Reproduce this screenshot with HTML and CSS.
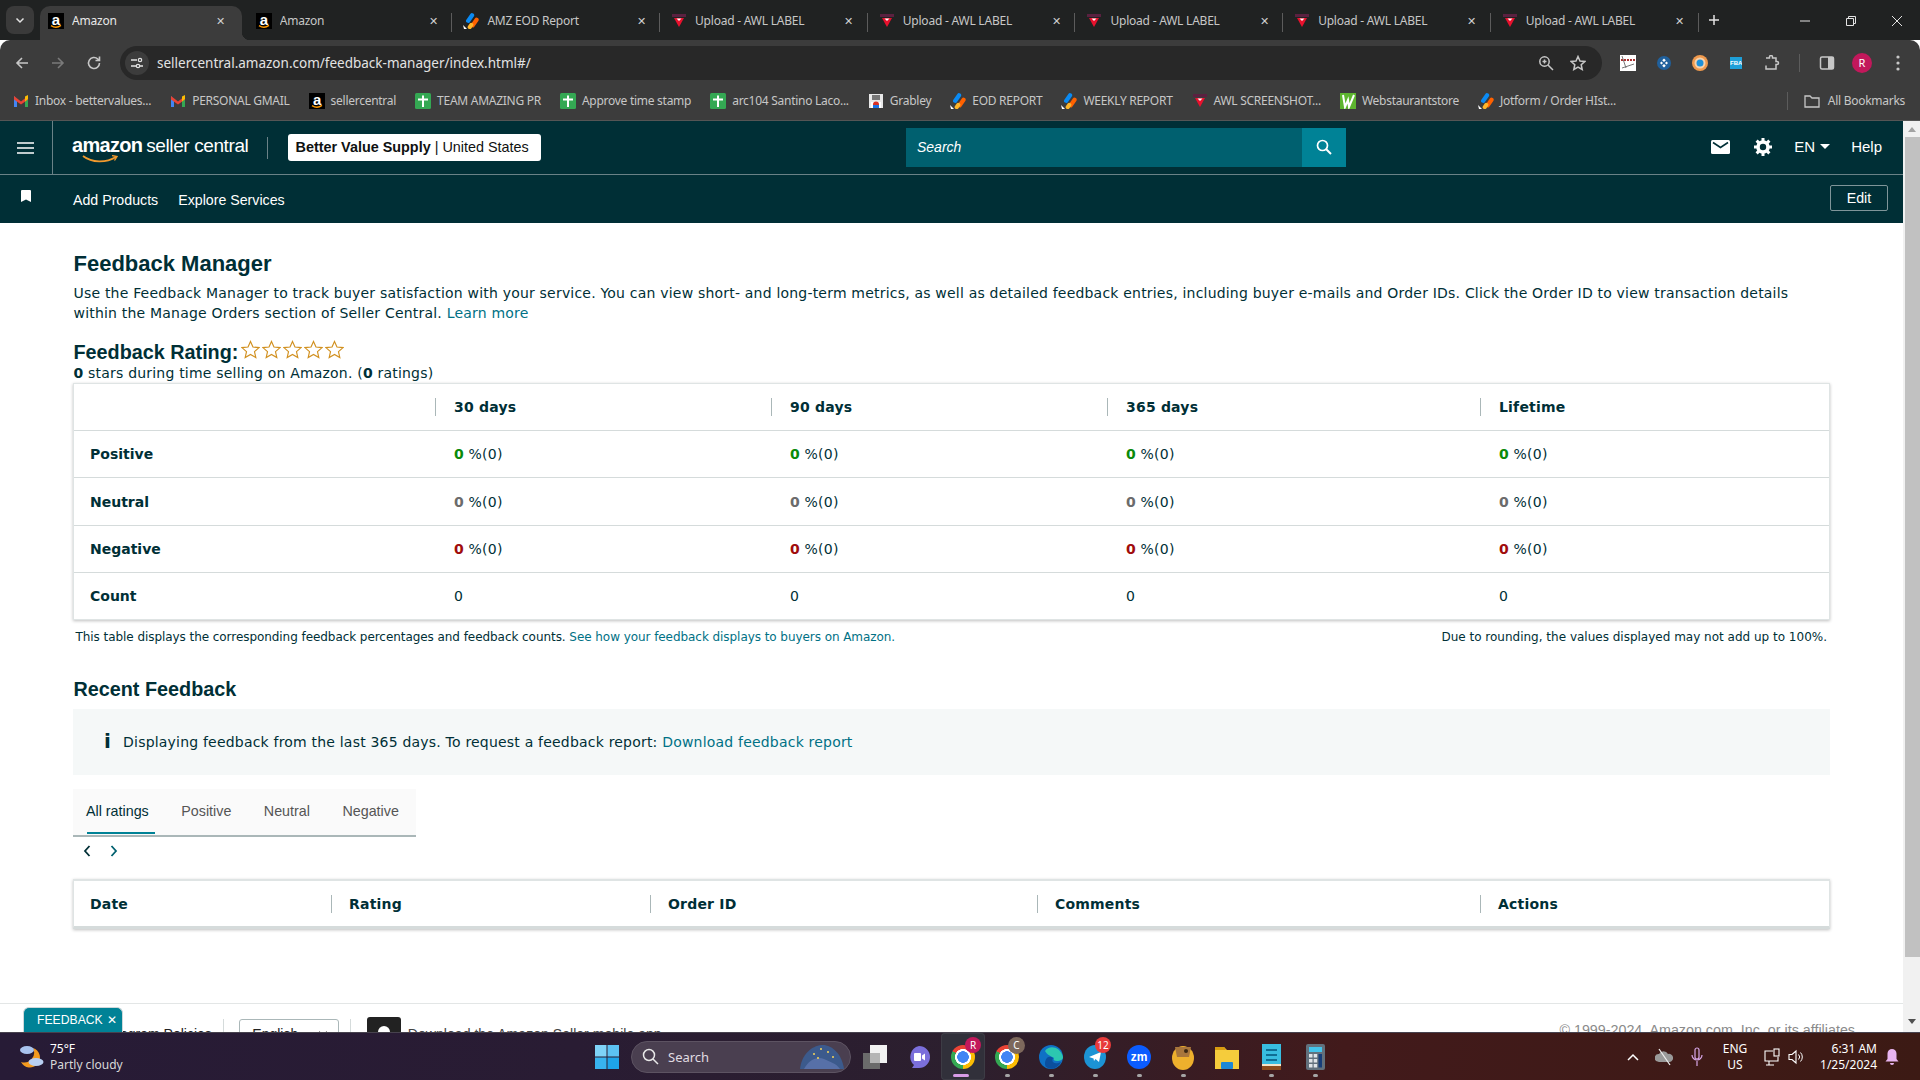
FILE: index.html
```html
<!DOCTYPE html>
<html lang="en">
<head>
<meta charset="utf-8">
<title>Amazon</title>
<link rel="stylesheet" href="styles.css">
</head>
<body>
<svg class="defs" width="0" height="0" aria-hidden="true">
  <defs>
    <symbol id="fav-amazon" viewBox="0 0 16 16"><rect width="16" height="16" fill="#000"/><text x="8" y="11.500" text-anchor="middle" font-family="Liberation Sans" font-weight="700" font-size="15" fill="#fff">a</text><path d="M3 12.600c3 2 7 2 10-.2" fill="none" stroke="#f90" stroke-width="1.400"/></symbol>
    <symbol id="fav-jot" viewBox="0 0 16 16"><rect x="5" y="-.5" width="4.200" height="11" rx="2" transform="rotate(35 7 5)" fill="#0a8af3"/><rect x="9.500" y="4" width="4.200" height="11" rx="2" transform="rotate(35 11.500 9.500)" fill="#ff6100"/><rect x="5.500" y="9.500" width="4" height="7" rx="2" transform="rotate(35 7.500 13)" fill="#ffb629"/><path d="M0 12l4 4H1z" fill="#fff"/></symbol>
    <symbol id="fav-awl" viewBox="0 0 16 16"><rect x="1" y="1" width="14" height="3" fill="#5a2140"/><path d="M3 5h10l-5 9z" fill="#e8112d"/><path d="M5.500 5.500h5L8 8z" fill="#fff"/></symbol>
    <symbol id="fav-gmail" viewBox="0 0 16 16"><path d="M1 3v11h3V7z" fill="#4285f4"/><path d="M15 3v11h-3V7z" fill="#34a853"/><path d="M1 3l7 5.500L15 3v3.500l-7 5-7-5z" fill="#ea4335"/><path d="M12 3.500L15 2v4l-3 2.500z" fill="#fbbc04"/></symbol>
    <symbol id="fav-sheet" viewBox="0 0 16 16"><rect width="16" height="16" rx="1.500" fill="#34a853"/><path d="M3 6.500h10M8 2.500V14" stroke="#fff" stroke-width="2"/></symbol>
    <symbol id="fav-grab" viewBox="0 0 16 16"><rect x="1" y="1" width="14" height="14" fill="#e8e8e8"/><path d="M4 2h8v5H4z" fill="#777"/><path d="M3 9h10v6H3z" fill="#fff"/><circle cx="8" cy="11.500" r="3" fill="#d93025"/><path d="M5 12h6v3H5z" fill="#1a73e8"/></symbol>
    <symbol id="fav-web" viewBox="0 0 16 16"><rect width="16" height="16" fill="#fff"/><path d="M0 0h16v16H0z" fill="#5db52f"/><path d="M3 2l2 12 3-7 1 7 5-12" fill="none" stroke="#fff" stroke-width="2"/></symbol>
    <symbol id="star" viewBox="0 0 20 20"><path d="M10 1.500l2.600 5.900 6.400.6-4.800 4.200 1.400 6.300L10 15.200l-5.600 3.300 1.400-6.300L1 8l6.400-.6z" fill="#fff" stroke="#d1901f" stroke-width="1.200"/></symbol>
  </defs>
</svg>

<div class="screen">
  <div class="tabstrip">
    <div class="tabsearch"><svg width="12" height="12" viewBox="0 0 12 12"><path d="M2.500 4.500L6 8l3.500-3.500" fill="none" stroke="#e3e3e3" stroke-width="1.500"/></svg></div>
    <div class="tab tab-active"><svg class="fav"><use href="#fav-amazon"/></svg><span class="tab-title">Amazon</span><span class="tab-x">✕</span></div>
    <div class="tab tab-plain"><svg class="fav"><use href="#fav-amazon"/></svg><span class="tab-title">Amazon</span><span class="tab-x">✕</span></div>
    <div class="tab"><svg class="fav"><use href="#fav-jot"/></svg><span class="tab-title">AMZ EOD Report</span><span class="tab-x">✕</span></div>
    <div class="tab"><svg class="fav"><use href="#fav-awl"/></svg><span class="tab-title">Upload - AWL LABEL</span><span class="tab-x">✕</span></div>
    <div class="tab"><svg class="fav"><use href="#fav-awl"/></svg><span class="tab-title">Upload - AWL LABEL</span><span class="tab-x">✕</span></div>
    <div class="tab"><svg class="fav"><use href="#fav-awl"/></svg><span class="tab-title">Upload - AWL LABEL</span><span class="tab-x">✕</span></div>
    <div class="tab"><svg class="fav"><use href="#fav-awl"/></svg><span class="tab-title">Upload - AWL LABEL</span><span class="tab-x">✕</span></div>
    <div class="tab"><svg class="fav"><use href="#fav-awl"/></svg><span class="tab-title">Upload - AWL LABEL</span><span class="tab-x">✕</span></div>
    <div class="newtab"><svg width="12" height="12" viewBox="0 0 12 12"><path d="M6 1v10M1 6h10" stroke="#e3e3e3" stroke-width="1.500"/></svg></div>
    <div class="winctl">
      <svg width="12" height="12" viewBox="0 0 12 12"><path d="M1 6h10" stroke="#e3e3e3"/></svg>
      <svg width="12" height="12" viewBox="0 0 12 12"><path d="M1.500 3.500h7v7h-7zM3.500 3.500v-2h7v7h-2" fill="none" stroke="#e3e3e3"/></svg>
      <svg width="12" height="12" viewBox="0 0 12 12"><path d="M1 1l10 10M11 1L1 11" stroke="#e3e3e3"/></svg>
    </div>
  </div>

  <div class="toolbar">
    <div class="nav-icons">
      <svg width="16" height="16" viewBox="0 0 16 16"><path d="M14 8H3M8 3L3 8l5 5" fill="none" stroke="#c7c7c7" stroke-width="1.600"/></svg>
      <svg width="16" height="16" viewBox="0 0 16 16"><path d="M2 8h11M8 3l5 5-5 5" fill="none" stroke="#7a7a7a" stroke-width="1.600"/></svg>
      <svg width="16" height="16" viewBox="0 0 16 16"><path d="M13.500 8A5.500 5.500 0 1 1 11.800 4L13.500 5.500M13.500 1.500v4h-4" fill="none" stroke="#c7c7c7" stroke-width="1.600"/></svg>
    </div>
    <div class="omnibox">
      <span class="siteinfo"><svg width="14" height="14" viewBox="0 0 14 14"><path d="M1 4h6M10 10h3M1 10h5" stroke="#e3e3e3" stroke-width="1.300"/><circle cx="10" cy="4" r="1.700" fill="none" stroke="#e3e3e3" stroke-width="1.200"/><circle cx="8" cy="10" r="1.700" fill="none" stroke="#e3e3e3" stroke-width="1.200"/></svg></span>
      <span class="url">sellercentral.amazon.com/feedback-manager/index.html#/</span>
      <span class="omni-right">
        <svg width="16" height="16" viewBox="0 0 16 16"><circle cx="6.500" cy="6.500" r="4.700" fill="none" stroke="#c7c7c7" stroke-width="1.500"/><path d="M10 10l5 5M4.500 6.500h4M6.500 4.500v4" stroke="#c7c7c7" stroke-width="1.500"/></svg>
        <svg width="16" height="16" viewBox="0 0 16 16"><path d="M8 1.500l2 4.500 4.800.5-3.600 3.200 1 4.800L8 12l-4.200 2.500 1-4.800L1.200 6.500 6 6z" fill="none" stroke="#c7c7c7" stroke-width="1.500"/></svg>
      </span>
    </div>
    <div class="ext-icons">
      <span class="ext"><svg width="16" height="16" viewBox="0 0 16 16"><rect width="16" height="16" fill="#fff"/><path d="M1 5h14" stroke="#a33" stroke-width="2" stroke-dasharray="2 1"/><path d="M2 13l12-4M2 1l4 12" stroke="#777"/></svg></span>
      <span class="ext"><svg width="14" height="14" viewBox="0 0 14 14"><circle cx="7" cy="7" r="7" fill="#20609c"/><path d="M7 2.500l1.800 1.800L7 6.100 5.200 4.300zM7 7.900l1.800 1.800L7 11.500 5.200 9.700zM3 7l1.500-1.500L6 7 4.500 8.500zM8 7l1.500-1.500L11 7 9.500 8.500z" fill="#fff"/></svg></span>
      <span class="ext"><svg width="16" height="16" viewBox="0 0 16 16"><circle cx="8" cy="8" r="8" fill="#f09a4e"/><circle cx="8" cy="8" r="5.500" fill="#f6d2ad"/><circle cx="8" cy="8" r="3.500" fill="#1e90d8"/></svg></span>
      <span class="ext"><span class="fba">FBA</span></span>
      <span class="ext"><svg width="16" height="16" viewBox="0 0 16 16"><path d="M2 3h3.500V2a1.500 1.500 0 0 1 3 0v1H12v3.500h1a1.500 1.500 0 0 1 0 3h-1V14H2v-3.500" fill="none" stroke="#c7c7c7" stroke-width="1.500"/></svg></span>
      <span class="ext-sep"></span>
      <span class="ext"><svg width="16" height="16" viewBox="0 0 16 16"><rect x="1.500" y="2" width="13" height="12" rx="1.500" fill="none" stroke="#c7c7c7" stroke-width="1.500"/><rect x="9" y="2" width="5.500" height="12" fill="#c7c7c7"/></svg></span>
      <span class="avatar">R</span>
      <span class="ext"><svg width="4" height="16" viewBox="0 0 4 16"><circle cx="2" cy="2" r="1.600" fill="#c7c7c7"/><circle cx="2" cy="8" r="1.600" fill="#c7c7c7"/><circle cx="2" cy="14" r="1.600" fill="#c7c7c7"/></svg></span>
    </div>
  </div>

  <div class="bookmarks">
    <span class="bm"><svg class="fav"><use href="#fav-gmail"/></svg>Inbox - bettervalues...</span>
    <span class="bm"><svg class="fav"><use href="#fav-gmail"/></svg>PERSONAL GMAIL</span>
    <span class="bm"><svg class="fav"><use href="#fav-amazon"/></svg>sellercentral</span>
    <span class="bm"><svg class="fav"><use href="#fav-sheet"/></svg>TEAM AMAZING PR</span>
    <span class="bm"><svg class="fav"><use href="#fav-sheet"/></svg>Approve time stamp</span>
    <span class="bm"><svg class="fav"><use href="#fav-sheet"/></svg>arc104 Santino Laco...</span>
    <span class="bm"><svg class="fav"><use href="#fav-grab"/></svg>Grabley</span>
    <span class="bm"><svg class="fav"><use href="#fav-jot"/></svg>EOD REPORT</span>
    <span class="bm"><svg class="fav"><use href="#fav-jot"/></svg>WEEKLY REPORT</span>
    <span class="bm"><svg class="fav"><use href="#fav-awl"/></svg>AWL SCREENSHOT...</span>
    <span class="bm"><svg class="fav"><use href="#fav-web"/></svg>Webstaurantstore</span>
    <span class="bm"><svg class="fav"><use href="#fav-jot"/></svg>Jotform / Order HIst...</span>
    <span class="bm-all"><svg class="fav" viewBox="0 0 16 16"><path d="M1 3h5l2 2h7v9H1z" fill="none" stroke="#c7c7c7" stroke-width="1.300"/></svg>All Bookmarks</span>
  </div>

  <div class="page">
    <div class="viewport">
      <header class="hdr">
        <div class="burger"><svg width="17" height="12" viewBox="0 0 17 12"><path d="M0 1h17M0 6h17M0 11h17" stroke="#fff" stroke-width="1.600"/></svg></div>
        <div class="logo">
          <span class="logo-am">amazon</span><span class="logo-sc">seller central</span>
          <svg class="logo-smile" width="36" height="8" viewBox="0 0 36 8"><path d="M1 1c9 7 23 7 33 1" fill="none" stroke="#f29a2e" stroke-width="1.800"/><path d="M30 .5l5 1-2.500 4" fill="none" stroke="#f29a2e" stroke-width="1.300"/></svg>
        </div>
        <span class="hdr-div"></span>
        <div class="badge"><b>Better Value Supply</b> | United States</div>
        <div class="searchbox"><span class="search-ph">Search</span><span class="search-btn"><svg width="16" height="16" viewBox="0 0 16 16"><circle cx="6.500" cy="6.500" r="5" fill="none" stroke="#fff" stroke-width="1.700"/><path d="M10 10l5 5" stroke="#fff" stroke-width="2"/></svg></span></div>
        <div class="hdr-right">
          <svg width="19" height="14" viewBox="0 0 19 14"><rect width="19" height="14" rx="1.500" fill="#fff"/><path d="M2 2.500l7.500 5 7.500-5" fill="none" stroke="#002f36" stroke-width="1.600"/></svg>
          <svg class="gear" width="18" height="18" viewBox="0 0 18 18"><circle cx="9" cy="9" r="5" fill="none" stroke="#fff" stroke-width="3.600"/><path d="M9 0v4M9 14v4M0 9h4M14 9h4M2.600 2.600l2.800 2.800M12.600 12.600l2.800 2.800M15.400 2.600l-2.800 2.800M5.400 12.600l-2.800 2.800" stroke="#fff" stroke-width="3"/></svg>
          <span class="lang">EN<i class="caret"></i></span>
          <span class="help">Help</span>
        </div>
      </header>
      <nav class="subnav">
        <svg class="bookmark-ico" width="10" height="12" viewBox="0 0 10 12"><path d="M0 1a1 1 0 0 1 1-1h8a1 1 0 0 1 1 1v11l-5-2.500L0 12z" fill="#fff"/></svg>
        <a class="subnav-link">Add Products</a>
        <a class="subnav-link">Explore Services</a>
        <span class="edit">Edit</span>
      </nav>

      <main class="content">
        <h1 class="title">Feedback Manager</h1>
        <p class="desc">Use the Feedback Manager to track buyer satisfaction with your service. You can view short- and long-term metrics, as well as detailed feedback entries, including buyer e-mails and Order IDs. Click the Order ID to view transaction details<br>within the Manage Orders section of Seller Central. <a class="lnk">Learn more</a></p>
        <div class="rating">
          <h2 class="rating-h">Feedback Rating:</h2>
          <span class="stars">
            <svg class="star"><use href="#star"/></svg><svg class="star"><use href="#star"/></svg><svg class="star"><use href="#star"/></svg><svg class="star"><use href="#star"/></svg><svg class="star"><use href="#star"/></svg>
          </span>
        </div>
        <p class="rating-sub"><b>0</b> stars during time selling on Amazon. (<b>0</b> ratings)</p>

        <table class="grid grid-metrics">
          <colgroup><col class="m1"><col class="m2"><col class="m2"><col class="m3"><col></colgroup>
          <thead><tr><th></th><th class="sep">30 days</th><th class="sep">90 days</th><th class="sep">365 days</th><th class="sep">Lifetime</th></tr></thead>
          <tbody>
            <tr><th>Positive</th><td><b class="pos">0</b> %(0)</td><td><b class="pos">0</b> %(0)</td><td><b class="pos">0</b> %(0)</td><td><b class="pos">0</b> %(0)</td></tr>
            <tr class="tall"><th>Neutral</th><td><b class="neu">0</b> %(0)</td><td><b class="neu">0</b> %(0)</td><td><b class="neu">0</b> %(0)</td><td><b class="neu">0</b> %(0)</td></tr>
            <tr><th>Negative</th><td><b class="neg">0</b> %(0)</td><td><b class="neg">0</b> %(0)</td><td><b class="neg">0</b> %(0)</td><td><b class="neg">0</b> %(0)</td></tr>
            <tr class="last"><th>Count</th><td>0</td><td>0</td><td>0</td><td>0</td></tr>
          </tbody>
        </table>
        <div class="notes"><span class="note-left">This table displays the corresponding feedback percentages and feedback counts. <a class="lnk">See how your feedback displays to buyers on Amazon.</a></span><span>Due to rounding, the values displayed may not add up to 100%.</span></div>

        <h2 class="recent">Recent Feedback</h2>
        <div class="infobox"><span class="info-i">i</span><span>Displaying feedback from the last 365 days. To request a feedback report: <a class="lnk">Download feedback report</a></span></div>
        <div class="tabs"><span class="rt rt-on">All ratings</span><span class="rt">Positive</span><span class="rt">Neutral</span><span class="rt">Negative</span></div>
        <div class="pager">
          <svg width="8" height="12" viewBox="0 0 8 12"><path d="M6.500 1L2 6l4.500 5" fill="none" stroke="#002f36" stroke-width="1.800"/></svg>
          <svg width="8" height="12" viewBox="0 0 8 12"><path d="M1.500 1L6 6l-4.500 5" fill="none" stroke="#00606f" stroke-width="1.800"/></svg>
        </div>
        <table class="grid grid-recent">
          <colgroup><col class="r1"><col class="r2"><col class="r3"><col class="r4"><col></colgroup>
          <thead><tr><th>Date</th><th class="sep">Rating</th><th class="sep">Order ID</th><th class="sep">Comments</th><th class="sep">Actions</th></tr></thead>
        </table>
      </main>

      <footer class="foot">
        <div class="foot-row">
          <span class="foot-link">Program Policies</span>
          <span class="foot-sep"></span>
          <span class="foot-select">English<svg width="10" height="7" viewBox="0 0 10 7"><path d="M1 1l4 4 4-4" fill="none" stroke="#111" stroke-width="1.800"/></svg></span>
          <span class="foot-sep"></span>
          <span class="foot-app"><svg width="14" height="18" viewBox="0 0 14 18"><rect x="1" y="1" width="12" height="16" rx="6" fill="#fff"/><text x="7" y="13" text-anchor="middle" font-family="Liberation Sans" font-size="10" font-weight="700" fill="#111">a</text></svg></span>
          <span class="foot-dl">Download the Amazon Seller mobile app</span>
          <span class="foot-copy">© 1999-2024, Amazon.com, Inc. or its affiliates</span>
        </div>
      </footer>
      <div class="feedback-tab">FEEDBACK<span class="fb-x">✕</span></div>
    </div>
    <div class="scrollbar">
      <i class="sb-up"></i>
      <div class="sb-thumb"></div>
      <i class="sb-down"></i>
    </div>
  </div>

  <div class="taskbar">
    <div class="weather">
      <svg width="26" height="24" viewBox="0 0 26 24"><path d="M14 3a10 10 0 1 1-12 14 10 10 0 0 0 12-14z" fill="#f29a1f"/><ellipse cx="8" cy="5" rx="7" ry="4" fill="#a9c3ee"/><ellipse cx="17" cy="17" rx="7.500" ry="4" fill="#b8cff2"/></svg>
      <div class="weather-txt"><span class="w1">75°F</span><span class="w2">Partly cloudy</span></div>
    </div>
    <div class="startbtn"><svg width="24" height="24" viewBox="0 0 24 24"><rect width="11.500" height="11.500" fill="#7fd3f7"/><rect x="12.500" width="11.500" height="11.500" fill="#5cc2f2"/><rect y="12.500" width="11.500" height="11.500" fill="#38b3ee"/><rect x="12.500" y="12.500" width="11.500" height="11.500" fill="#1ea4e8"/></svg></div>
    <div class="tb-search">
      <svg width="17" height="17" viewBox="0 0 17 17"><circle cx="7" cy="7" r="5.500" fill="none" stroke="#e8e8e8" stroke-width="1.500"/><path d="M11 11l5 5" stroke="#e8e8e8" stroke-width="1.500"/></svg>
      <span class="tb-search-txt">Search</span>
      <svg class="tb-search-art" width="46" height="26" viewBox="0 0 46 26"><path d="M1 25C3 8 15 1 24 1s19 9 21 24z" fill="#3c5a8c"/><path d="M5 25c5-10 14-13 20-10s12 4 16 10z" fill="#5770a8"/><g fill="#f5d65a"><circle cx="15" cy="10" r="1"/><circle cx="22" cy="5" r="1"/><circle cx="29" cy="8" r="1"/><circle cx="34" cy="13" r="1"/><circle cx="19" cy="14" r="1"/></g></svg>
    </div>
    <div class="tb-icons">
      <span class="tb-icon"><svg width="24" height="24" viewBox="0 0 24 24"><rect y="8" width="17" height="16" fill="#6b6b6b"/><rect x="7" y="0" width="17" height="18" fill="#f2f2f2"/><rect x="7" y="8" width="10" height="10" fill="#b5b5b5"/></svg></span>
      <span class="tb-icon"><svg width="24" height="24" viewBox="0 0 24 24"><path d="M12 1a11 11 0 0 1 0 22H5l2-3A11 11 0 0 1 12 1z" fill="#7b6fdb"/><rect x="7" y="8" width="7" height="8" rx="1" fill="#fff"/><path d="M15 10.500l3-2v7l-3-2z" fill="#fff"/></svg></span>
      <span class="tb-icon tb-active"><span class="chrome"></span><span class="tb-badge tb-r">R</span><i class="tb-bar"></i></span>
      <span class="tb-icon"><span class="chrome"></span><span class="tb-badge tb-c">C</span><i class="tb-dot"></i></span>
      <span class="tb-icon"><svg width="24" height="24" viewBox="0 0 24 24"><circle cx="12" cy="12" r="12" fill="#0f71c5"/><path d="M6 6C10 0 21 1 24 12c0 3-3 4-6 4-3 0-4-1-3-3-3-2-7-3-9-7z" fill="#2cc7b0"/><path d="M6 19c0-6 4-9 8-6-2 4 1 7 8 4-3 6-9 8-13 6-2-1-3-2-3-4z" fill="#0b4f9e"/></svg><i class="tb-dot"></i></span>
      <span class="tb-icon"><span class="tb-tele"><svg width="12" height="12" viewBox="0 0 12 12"><path d="M0 6l12-5-2 10-3.500-3L5 10 4.500 7.500z" fill="#fff"/></svg></span><span class="tb-badge tb-12">12</span><i class="tb-dot"></i></span>
      <span class="tb-icon"><span class="tb-zm">zm</span><i class="tb-dot"></i></span>
      <span class="tb-icon"><svg width="24" height="26" viewBox="0 0 24 26"><ellipse cx="12" cy="14" rx="11" ry="12" fill="#eeb02d"/><path d="M4 3h16l-2 10H6z" fill="#a8763c"/><circle cx="15" cy="7" r="2" fill="#3a2712"/></svg><i class="tb-dot"></i></span>
      <span class="tb-icon"><svg width="24" height="24" viewBox="0 0 24 24"><path d="M0 2h9l3 3h12v19H0z" fill="#f5cc3c"/><path d="M0 2h9l2 3H0z" fill="#d89c10"/><rect x="6" y="17" width="12" height="7" rx="1" fill="#1b87d6"/></svg></span>
      <span class="tb-icon"><svg width="19" height="26" viewBox="0 0 19 26"><rect width="19" height="26" fill="#38bde0"/><rect y="21" width="19" height="5" fill="#8a4b1d"/><rect y="20" width="19" height="2" fill="#f4e4c8"/><path d="M4 6h11M4 11h11M4 16h11" stroke="#0f6e94" stroke-width="2"/></svg><i class="tb-dot"></i></span>
      <span class="tb-icon"><svg width="19" height="26" viewBox="0 0 19 26"><rect width="19" height="26" rx="2" fill="#62707c"/><rect x="3" y="3" width="13" height="5" fill="#44c3ea"/><g fill="#e0e4e8"><rect x="3" y="10" width="3.500" height="3.500"/><rect x="7.700" y="10" width="3.500" height="3.500"/><rect x="3" y="15" width="3.500" height="3.500"/><rect x="7.700" y="15" width="3.500" height="3.500"/><rect x="3" y="20" width="3.500" height="3.500"/><rect x="7.700" y="20" width="3.500" height="3.500"/></g><rect x="12.500" y="10" width="3.500" height="13.500" fill="#173e7a"/></svg><i class="tb-dot"></i></span>
    </div>
    <div class="tray">
      <span class="tr-chev"><svg width="12" height="8" viewBox="0 0 12 8"><path d="M1 7l5-5 5 5" fill="none" stroke="#fff" stroke-width="1.500"/></svg></span>
      <span class="tr-cloud"><svg width="18" height="18" viewBox="0 0 18 18"><path d="M1 13a4 4 0 0 1 3-7 5 5 0 0 1 9 0 4 4 0 0 1 2 8H4z" fill="#9a9a9a"/><path d="M4 1l11 16" stroke="#eee" stroke-width="1.300"/></svg></span>
      <span class="tr-mic"><svg width="12" height="20" viewBox="0 0 12 20"><rect x="4" y="1" width="4" height="11" rx="2" fill="none" stroke="#d8a7e8" stroke-width="1.200"/><path d="M1 8a5 5 0 0 0 10 0M6 14v5" fill="none" stroke="#d8a7e8" stroke-width="1.200"/></svg></span>
      <span class="tr-lang">ENG<br>US</span>
      <span class="tr-mon"><svg width="16" height="18" viewBox="0 0 16 18"><path d="M9 3H1v10h13V9M5 13v4M2 17h8" fill="none" stroke="#fff" stroke-width="1.100"/><rect x="10" y="1" width="5" height="7" fill="none" stroke="#fff" stroke-width="1.100"/></svg></span>
      <span class="tr-spk"><svg width="16" height="16" viewBox="0 0 16 16"><path d="M1 5.500h3L8 2v12l-4-3.500H1z" fill="none" stroke="#fff" stroke-width="1.100"/><path d="M10.500 5.500a3.500 3.500 0 0 1 0 5M12.500 3.500a6.500 6.500 0 0 1 0 9" fill="none" stroke="#fff"/></svg></span>
      <span class="tr-time">6:31 AM<br>1/25/2024</span>
      <span class="tr-bell"><svg width="14" height="18" viewBox="0 0 14 18"><path d="M7 1a4.500 4.500 0 0 1 4.500 4.500V11l2 2.500H.5l2-2.500V5.500A4.500 4.500 0 0 1 7 1z" fill="#e8b4f0"/><path d="M5 15h4a2 2 0 0 1-4 0z" fill="#e8b4f0"/></svg></span>
    </div>
  </div>
</div>
</body>
</html>
```
FILE: styles.css
```css
* { box-sizing: border-box; }
html, body { margin: 0; padding: 0; height: 100%; overflow: hidden; }
body { background: #fff; font-family: "Liberation Sans", Arial, sans-serif; }
.defs { position: absolute; }
.screen { display: flex; flex-direction: column; height: 1080px; width: 1920px; }
.fav { width: 16px; height: 16px; flex: none; }

/* browser chrome */
.tabstrip { height: 40px; flex: none; display: flex; align-items: flex-end; background: #202222; padding-left: 6px; font-family: "Noto Sans", sans-serif; font-size: 12px; color: #c7c7c7; }
.tabsearch { width: 28px; height: 28px; margin: 0 6px 6px 0; border-radius: 8px; background: #3a3a3a; display: flex; align-items: center; justify-content: center; flex: none; }
.tab { position: relative; width: 207.700px; height: 34px; flex: none; display: flex; align-items: center; padding: 0 16px 5px 8px; gap: 8px; }
.tab::after { content: ""; position: absolute; right: 3px; top: 7px; height: 19px; width: 1px; background: #5c5c5c; }
.tab-active { width: 202px; margin-right: 5.700px; background: #3c3c3c; border-radius: 10px 10px 0 0; color: #e8e8e8; }
.tab-active::after { right: -8px; top: auto; bottom: 0; width: 8px; height: 8px; background: radial-gradient(circle at 100% 0, #202222 8px, #3c3c3c 8.500px); }
.tab-title { flex: 1; white-space: nowrap; overflow: hidden; letter-spacing: -.22px; }
.tab-x { font-size: 11px; color: #d0d0d0; width: 12px; text-align: center; }
.newtab { display: flex; align-items: center; height: 34px; padding: 0 0 6px 6px; }
.winctl { margin-left: auto; display: flex; gap: 34px; align-self: flex-start; padding: 15px 17px 0 0; }

.toolbar { height: 41px; flex: none; display: flex; align-items: flex-start; background: #3c3c3c; border-radius: 10px 10px 0 0; padding-top: 6px; }
.nav-icons { width: 120px; height: 34px; flex: none; display: flex; align-items: center; gap: 20px; padding-left: 14px; }
.omnibox { width: 1482px; height: 34px; flex: none; border-radius: 17px; background: #282828; display: flex; align-items: center; padding-left: 5px; }
.siteinfo { width: 24px; height: 24px; border-radius: 50%; background: #3c3c3c; display: flex; align-items: center; justify-content: center; flex: none; }
.url { margin-left: 8px; font-family: "Noto Sans", sans-serif; font-size: 13.500px; color: #e3e3e3; }
.omni-right { margin-left: auto; display: flex; gap: 16px; padding-right: 16px; }
.ext-icons { display: flex; align-items: center; height: 34px; padding-left: 8px; }
.ext { width: 36px; height: 34px; display: flex; align-items: center; justify-content: center; flex: none; }
.fba { width: 12px; height: 12px; background: #1e9fd8; color: #fff; font-size: 6px; font-weight: 700; line-height: 12px; text-align: center; overflow: hidden; }
.ext-sep { width: 1px; height: 18px; background: #5c5c5c; margin: 0 9px; flex: none; }
.avatar { width: 20px; height: 20px; margin: 0 8px 0 7px; border-radius: 50%; background: #c2185b; color: #fff; font-family: "Noto Sans", sans-serif; font-size: 11px; line-height: 20px; text-align: center; flex: none; }

.bookmarks { height: 40px; flex: none; display: flex; align-items: center; gap: 19px; padding: 0 15px 0 13px; background: #3c3c3c; border-bottom: 1px solid #555; font-family: "Noto Sans", sans-serif; font-size: 12px; letter-spacing: -.27px; color: #c7c7c7; white-space: nowrap; }
.bm { display: flex; align-items: center; gap: 6px; }
.bm-all { margin-left: auto; display: flex; align-items: center; gap: 8px; border-left: 1px solid #5c5c5c; padding-left: 16px; height: 18px; }

/* page */
.page { flex: 1; min-height: 0; display: flex; }
.viewport { position: relative; flex: 1; min-width: 0; display: flex; flex-direction: column; overflow: hidden; }
.hdr { height: 54px; flex: none; display: flex; align-items: center; background: #002f36; border-bottom: 1px solid #6a8287; color: #fff; }
.burger { width: 53px; height: 100%; display: flex; align-items: center; justify-content: center; border-right: 1px solid #6a8287; padding-right: 1px; flex: none; }
.logo { position: relative; display: flex; align-items: baseline; margin: -4px 0 0 19px; width: 195px; flex: none; }
.logo-am { font-size: 20px; font-weight: 700; letter-spacing: -.7px; }
.logo-sc { margin-left: 4px; font-size: 19px; letter-spacing: -.4px; font-weight: 400; }
.logo-smile { position: absolute; left: 10px; top: 21px; }
.hdr-div { width: 1px; height: 22px; background: #6a8287; flex: none; }
.badge { margin-left: 20px; height: 27px; width: 253px; border-radius: 3px; background: #fff; color: #0f1111; font-size: 14.400px; line-height: 26px; padding-left: 7.500px; white-space: nowrap; flex: none; margin-top: -1px; }
.searchbox { margin-left: 365px; width: 440px; height: 39px; flex: none; display: flex; align-items: center; justify-content: space-between; background: #00606f; padding-left: 11px; margin-top: -1px; }
.search-ph { font-style: italic; font-size: 14px; color: #fff; }
.search-btn { width: 44px; height: 39px; background: #008296; display: flex; align-items: center; justify-content: center; }
.hdr-right { margin: -2px 0 0 auto; display: flex; align-items: center; padding-right: 21px; font-size: 15px; }
.gear { margin-left: 24px; }
.lang { margin-left: 22px; display: flex; align-items: center; }
.caret { width: 0; height: 0; margin-left: 5px; border: 5px solid transparent; border-top-color: #fff; border-bottom: 0; }
.help { margin-left: 21px; }

.subnav { height: 48px; flex: none; display: flex; align-items: center; background: #002f36; color: #fff; font-size: 14.200px; padding: 2px 0 0 21px; }
.bookmark-ico { margin: -8px 42px 0 0; }
.subnav-link { margin-right: 20px; }
.edit { margin: -4px 15px 0 auto; width: 58px; height: 26px; border: 1px solid #7f9599; border-radius: 2px; line-height: 24px; text-align: center; }

.content { flex: 1; min-height: 0; padding: 28px 73px 0; color: #002f36; font-family: "DejaVu Sans", sans-serif; font-size: 14px; line-height: 20px; letter-spacing: .2px; }
.title { margin: 0 0 6px; padding-left: .5px; font: 700 22px/26px "Liberation Sans", Arial, sans-serif; letter-spacing: 0; color: #002f36; }
.desc { margin: 0 0 17px; padding-left: .5px; white-space: nowrap; }
.lnk { color: #007185; }
.rating { display: flex; align-items: center; height: 24px; padding-left: .5px; }
.rating-h { margin: 0; font: 700 19.800px/24px "Liberation Sans", Arial, sans-serif; letter-spacing: 0; }
.stars { display: flex; margin: -6px 0 0 3px; gap: 1.800px; }
.star { width: 19px; height: 19px; }
.rating-sub { margin: 0 0 1px; padding-left: .5px; line-height: 18px; }

.grid { width: 100%; table-layout: fixed; border-collapse: separate; border-spacing: 0; background: #fff; border: 1px solid #dfe4e4; box-shadow: 0 1px 3px rgba(0,0,0,.25); }
.grid th, .grid td { height: 47px; padding: 0 0 0 18px; text-align: left; border-bottom: 1px solid #d5dbdb; font-weight: 400; position: relative; }
.grid th { font-weight: 700; color: #002f36; letter-spacing: 0; }
.grid thead th { letter-spacing: .2px; }
.grid td { letter-spacing: .2px; }
.grid tr th:first-child { padding-left: 16px; }
.grid-metrics td, .grid-metrics th.sep { padding-left: 19px; }
.grid tbody tr:last-child > * { border-bottom: 0; }
.grid .tall > * { height: 48px; }
.grid .last > * { height: 46px; }
.grid th.sep::before { content: ""; position: absolute; left: 0; top: 14px; height: 18px; width: 1px; background: #aab7b8; }
.m1 { width: 361px; } .m2 { width: 336px; } .m3 { width: 373px; }
.r1 { width: 257px; } .r2 { width: 319px; } .r3 { width: 387px; } .r4 { width: 443px; }
.pos { color: #0a8a0a; } .neu { color: #6b6b6b; } .neg { color: #a00c0c; }
.notes { display: flex; justify-content: space-between; padding: 9px 3px 0 2.500px; font-size: 12px; line-height: 16px; letter-spacing: 0; }
.note-left { letter-spacing: -.06px; }
.recent { margin: 32px 0 8px; padding-left: .5px; font: 700 19.800px/24px "Liberation Sans", Arial, sans-serif; letter-spacing: 0; color: #002f36; }
.infobox { height: 66px; background: #f5f8f8; display: flex; align-items: center; padding-left: 31px; gap: 12px; }
.info-i { font: 700 20px/20px "DejaVu Sans", sans-serif; margin-top: -3px; }
.tabs { position: relative; width: 343px; height: 48px; margin-top: 14px; background: #fafafa; border-bottom: 2px solid #aab7b8; display: flex; gap: 32.500px; padding: 14px 0 0 13px; font: 14.300px/17px "Liberation Sans", Arial, sans-serif; color: #555; letter-spacing: 0; }
.rt { position: relative; white-space: nowrap; }
.rt-on { color: #002f36; }
.rt-on::after { content: ""; position: absolute; left: 1px; right: -6px; top: 29px; height: 2px; background: #008296; }
.pager { display: flex; gap: 19px; height: 42px; padding: 8px 0 0 10px; align-items: flex-start; }
.grid-recent { border-width: 2px 1px 1px; border-color: #dfe4e4; border-bottom: 3px solid #d5dbdb; }
.grid-recent th { height: 45px; border-bottom: 0; }

.foot { height: 29px; flex: none; border-top: 1px solid #e3e6e6; overflow: hidden; }
.foot-row { display: flex; align-items: center; height: 34px; margin-top: 13px; font-size: 14px; color: #222; white-space: nowrap; padding-left: 106px; position: relative; }
.foot-sep { width: 1px; height: 30px; background: #d5dbdb; margin: 0 15.500px 0 11px; flex: none; }
.foot-select { width: 100px; height: 30px; border: 1px solid #aab7b8; border-radius: 3px; display: flex; align-items: center; justify-content: space-between; padding: 0 10px 0 12px; flex: none; }
.foot-app { width: 34px; height: 34px; background: #222; border-radius: 3px; display: flex; align-items: center; justify-content: center; flex: none; }
.foot-dl { margin-left: 7px; color: #444; font-size: 14.100px; }
.foot-copy { position: absolute; right: 48px; top: 5px; color: #8a8a8a; font-size: 14.300px; }
.feedback-tab { position: absolute; left: 23px; bottom: 0; width: 100px; height: 25px; background: #008296; border: 1px solid #cfd8da; border-bottom: 0; border-radius: 6px 6px 0 0; color: #fff; font-size: 12.200px; line-height: 24px; padding-left: 13px; white-space: nowrap; }
.fb-x { margin-left: 4px; font-size: 12px; }

.scrollbar { width: 17px; flex: none; background: #f1f1f1; display: flex; flex-direction: column; align-items: center; }
.sb-up { width: 0; height: 0; margin: 6px 0 5px; border: 4px solid transparent; border-bottom: 5px solid #a3a3a3; border-top: 0; }
.sb-thumb { height: 820px; width: 15px; margin-left: 2px; background: #c1c1c1; flex: none; }
.sb-down { width: 0; height: 0; margin: 62px 0 0; border: 4px solid transparent; border-top: 5px solid #505050; border-bottom: 0; }

/* taskbar */
.taskbar { height: 48px; flex: none; display: flex; align-items: center; background: linear-gradient(90deg, #271b36 0, #291c33 30%, #2c1f2e 50%, #421a1b 70%, #3c1a14 100%); border-top: 1px solid #47424e; color: #fff; font-family: "Noto Sans", sans-serif; font-size: 12px; }
.weather { width: 585px; flex: none; display: flex; align-items: center; gap: 5px; padding-left: 19px; }
.weather-txt { display: flex; flex-direction: column; line-height: 16px; }
.w2 { color: #d8d8d8; }
.startbtn { width: 44px; display: flex; justify-content: center; flex: none; padding-right: 1px; }
.tb-search { width: 220px; height: 32px; margin-left: 2px; border-radius: 16px; background: #4a3f50; border: 1px solid #5d5362; display: flex; align-items: center; padding-left: 10px; gap: 9px; font-size: 13px; color: #e0dce2; flex: none; }
.tb-search-art { margin-left: auto; margin-right: 5px; }
.tb-icons { display: flex; margin-left: 2px; }
.tb-icon { position: relative; width: 44px; height: 47px; display: flex; align-items: center; justify-content: center; flex: none; }
.tb-active { background: #31303a; border-radius: 4px; box-shadow: inset 0 0 0 1px #3d3c45; }
.chrome { width: 24px; height: 24px; border-radius: 50%; background: radial-gradient(circle, #4285f4 0 33%, #fff 35% 46%, transparent 48%), conic-gradient(from -60deg, #ea4335 0 120deg, #fbbc04 120deg 240deg, #34a853 240deg 360deg); }
.tb-badge { position: absolute; right: 4px; top: 4px; width: 16px; height: 16px; border-radius: 50%; color: #fff; font-size: 10px; line-height: 16px; text-align: center; }
.tb-r { background: #c2185b; }
.tb-c { background: #7d685c; width: 17px; height: 17px; }
.tb-12 { background: #e83a3a; right: 6px; }
.tb-bar { position: absolute; left: 12px; bottom: 3px; width: 16px; height: 3px; border-radius: 2px; background: #d79be6; }
.tb-dot { position: absolute; left: 20px; bottom: 3px; width: 5px; height: 3px; border-radius: 2px; background: #a5a5a5; }
.tb-tele { width: 22px; height: 24px; border-radius: 50%; background: #1c93d4; display: flex; align-items: center; justify-content: center; }
.tb-zm { width: 24px; height: 24px; border-radius: 50%; background: #0b5cff; color: #fff; font: 700 12px/24px "Liberation Sans", sans-serif; text-align: center; }
.tray { margin-left: auto; display: flex; align-items: center; height: 100%; padding-right: 13px; text-align: center; }
.tray > span { display: flex; align-items: center; justify-content: center; flex: none; }
.tr-chev { width: 26px; }
.tr-cloud { width: 36px; }
.tr-mic { width: 30px; }
.tr-lang { width: 46px; line-height: 16px; }
.tr-mon { width: 28px; }
.tr-spk { width: 20px; }
.tray > .tr-time { width: 71px; line-height: 16px; text-align: right; justify-content: flex-end; }
.tr-bell { width: 30px; }
```
